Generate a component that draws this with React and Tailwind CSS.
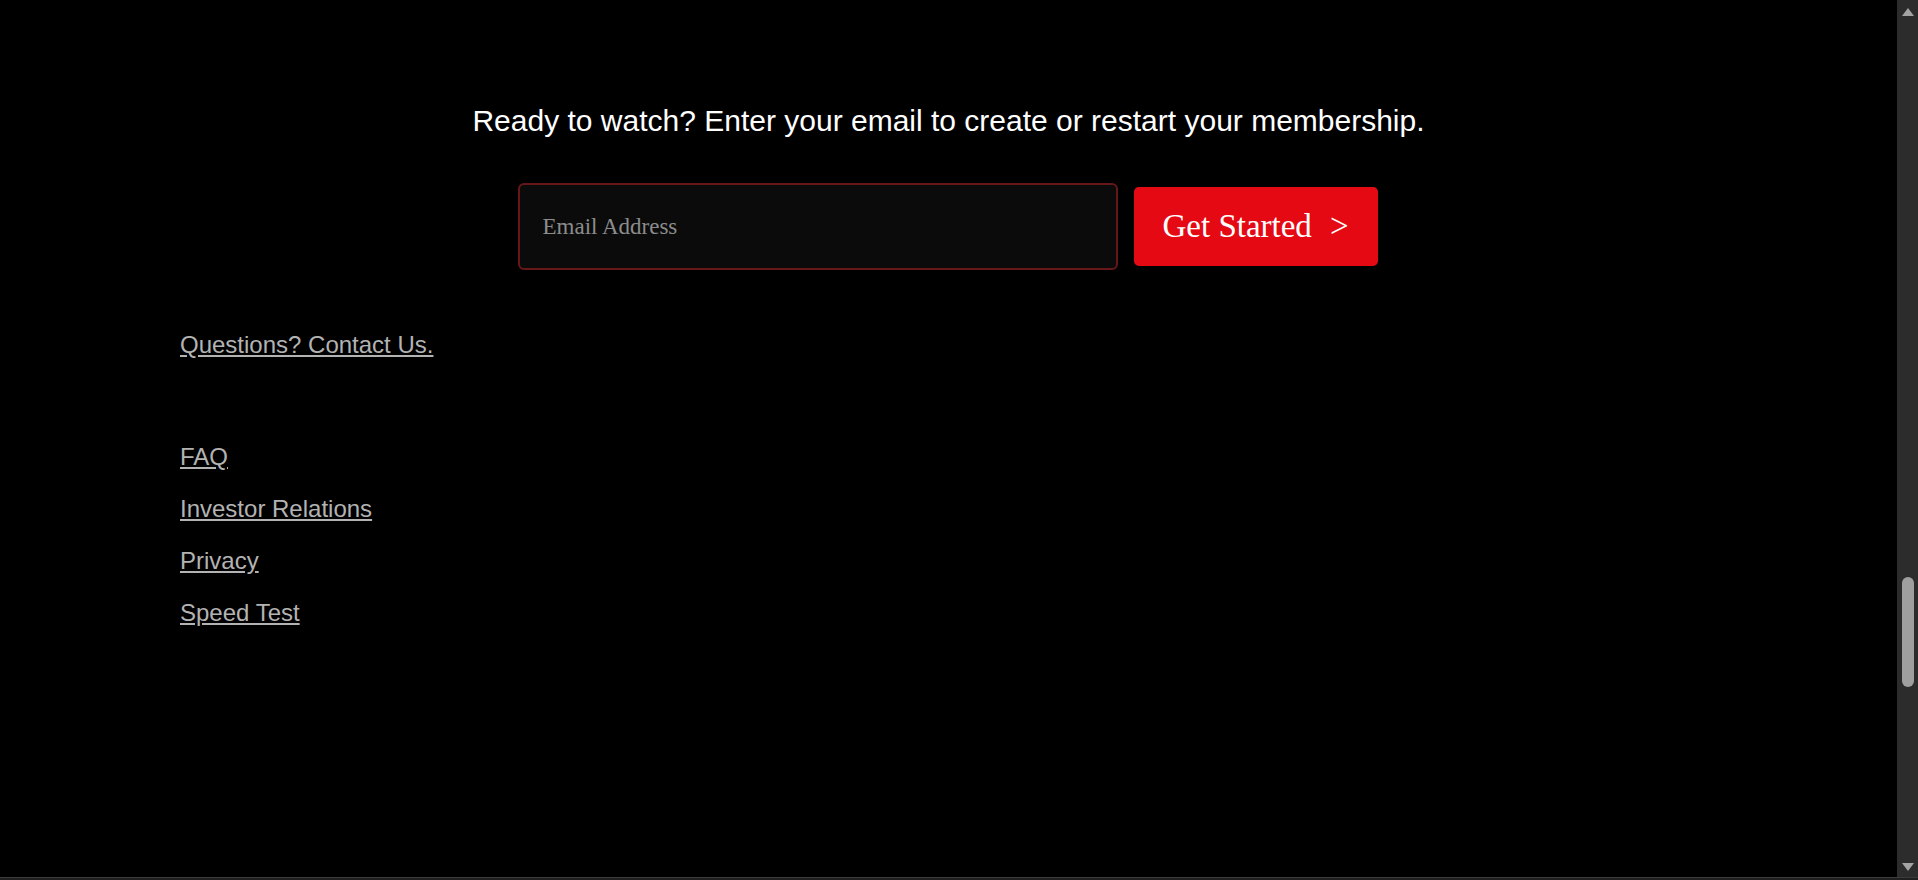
import React from 'react';

const footerLinks = ['FAQ', 'Investor Relations', 'Privacy', 'Speed Test'];

const Arrow = ({ down }) => (
    <svg width="14" height="10" viewBox="0 0 14 10" className="block">
        {down ? <path d="M1 1 L13 1 L7 9 Z" fill="#a3a3a3" /> : <path d="M7 1 L13 9 L1 9 Z" fill="#a3a3a3" />}
    </svg>
);

const ScrollBar = () => (
    <div className="flex h-full w-[21px] shrink-0 flex-col items-center bg-[#2c2c2c]">
        <div className="flex h-[21px] items-center justify-center pt-[2px]">
            <Arrow />
        </div>
        <div className="flex w-full flex-1 flex-col items-center">
            {/* thumb sits near the bottom: page is scrolled */}
            <div className="mt-[556px] h-[110px] w-[12px] rounded-full bg-[#9f9f9f]" />
        </div>
        <div className="flex h-[21px] items-center justify-center">
            <Arrow down />
        </div>
    </div>
);

const App = () => {
    return (
        <div className="flex h-[880px] w-full flex-col overflow-hidden bg-black">
            <div className="flex min-h-0 flex-1">
                <main className="flex-1 font-['Liberation_Sans',Arial,sans-serif]">
                    {/* Email signup */}
                    <section className="flex flex-col items-center pt-[103px]">
                        <h3 className="text-[30px] leading-[36px] text-white">
                            Ready to watch? Enter your email to create or restart your membership.
                        </h3>
                        <form className="mt-[44px] -ml-[2px] flex items-center gap-[16px]" onSubmit={(e) => e.preventDefault()}>
                            <input
                                type="email"
                                placeholder="Email Address"
                                className="h-[87px] w-[600px] rounded-[6px] border-2 border-[#661717] bg-[#0b0b0b] px-[23px] font-['Liberation_Serif','Times_New_Roman',serif] text-[23px] text-white outline-none placeholder:text-[#8c8c8c]"
                            />
                            <button
                                type="submit"
                                className="flex h-[79px] w-[244px] items-center justify-center rounded-[5px] bg-[#e50914] font-['Liberation_Serif','Times_New_Roman',serif] text-[33px] text-white"
                            >
                                Get Started <span className="ml-[18px]">&gt;</span>
                            </button>
                        </form>
                    </section>

                    {/* Footer */}
                    <footer className="mt-[61px] pl-[180px] text-[24px] leading-[28px] text-[#b3b3b3]">
                        <a href="#" className="underline">Questions? Contact Us.</a>
                        <ul className="mt-[84px] flex flex-col gap-[24px]">
                            {footerLinks.map((link) => (
                                <li key={link}>
                                    <a href="#" className="underline">{link}</a>
                                </li>
                            ))}
                        </ul>
                    </footer>
                </main>
                <ScrollBar />
            </div>
            <div className="h-[3px] w-full border-t border-[#3c3c3c] bg-[#1f1f1f]" />
        </div>
    );
};

export default App;
